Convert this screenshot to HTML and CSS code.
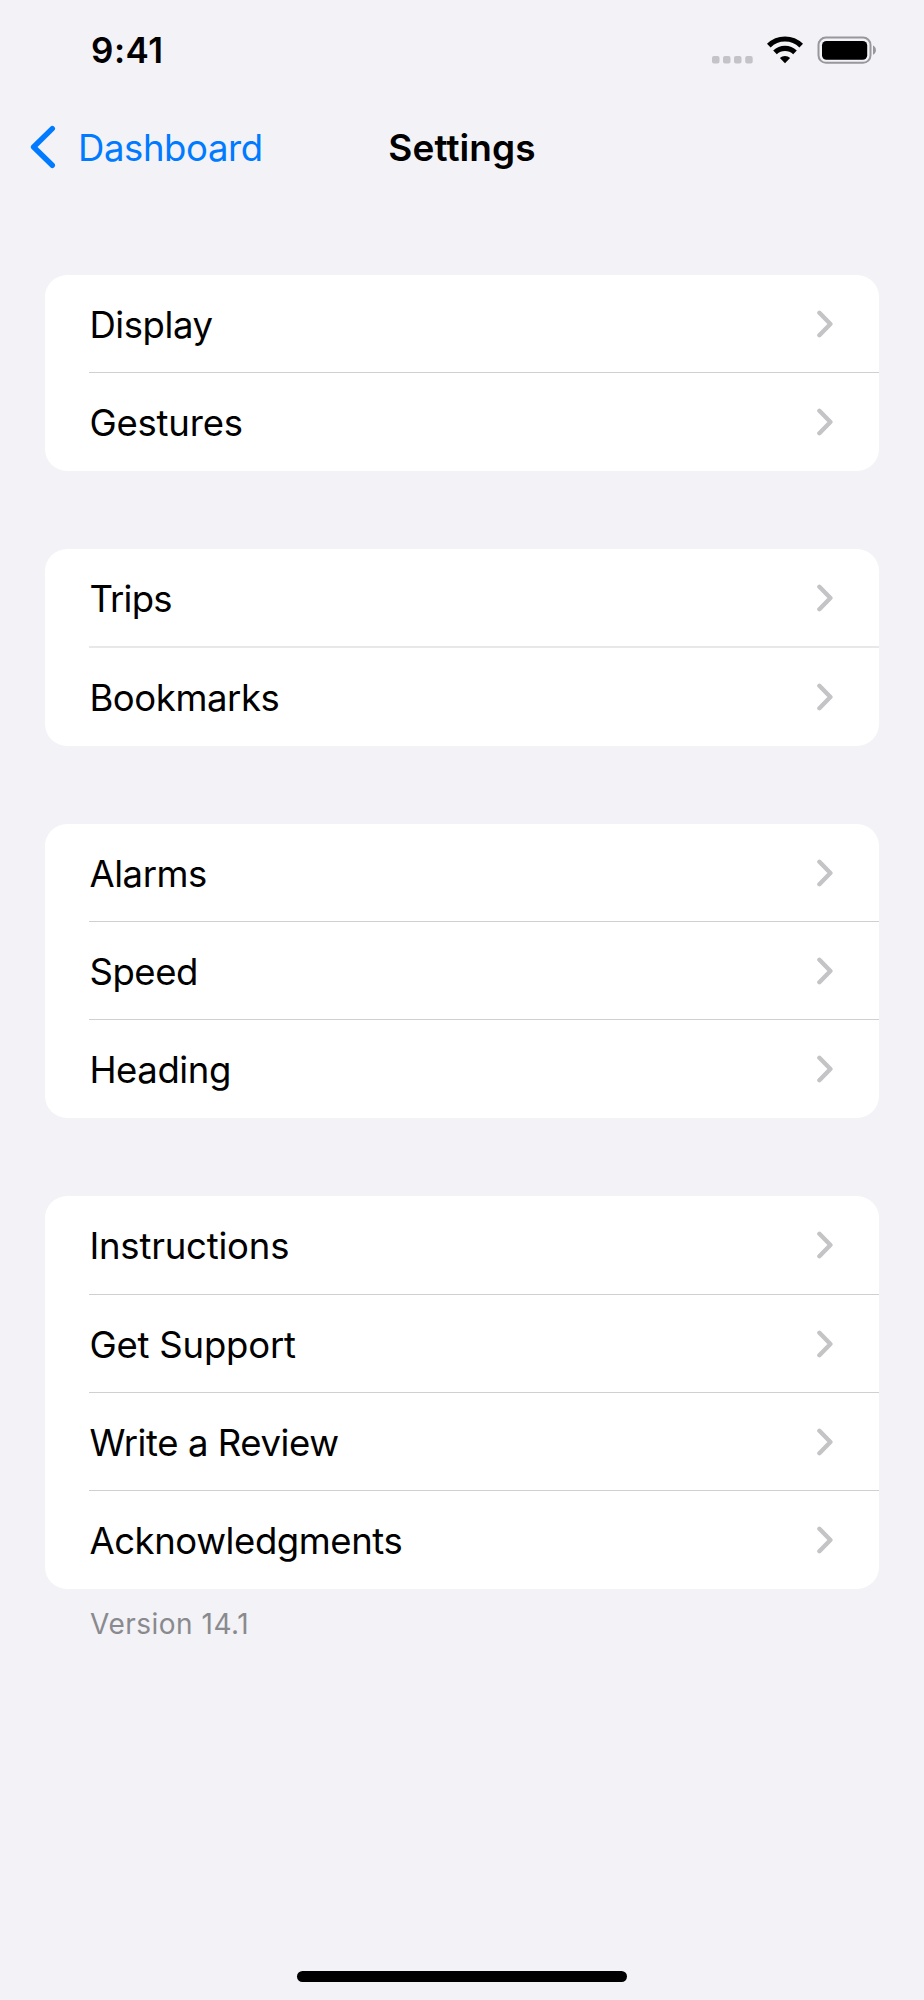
FILE: index.html
```html
<!DOCTYPE html>
<html lang="en">
<head>
    <meta charset="UTF-8">
    <meta name="viewport" content="width=device-width, initial-scale=1.0">
    <title>Settings</title>
    <link rel="stylesheet" href="styles.css">
</head>
<body>
    <svg class="sprite" width="0" height="0">
        <symbol id="chevron" viewBox="0 0 16 28">
            <path d="M2.4 2.8L13.4 14L2.4 25.2" fill="none" stroke="currentColor" stroke-width="4.4" stroke-linecap="round" stroke-linejoin="round"/>
        </symbol>
    </svg>
    <div class="screen">
        <header class="status-bar">
            <span class="time">9:41</span>
            <div class="status-icons">
                <svg class="signal" width="42" height="8" viewBox="0 0 42 8" fill="#c3c3c8">
                    <rect x="0" width="7.5" height="7.6" rx="2"/>
                    <rect x="11" width="7.5" height="7.6" rx="2"/>
                    <rect x="22" width="7.5" height="7.6" rx="2"/>
                    <rect x="33.2" width="7.5" height="7.6" rx="2"/>
                </svg>
                <svg class="wifi" width="36" height="28" viewBox="0 0 36 28" fill="none" stroke="#000">
                    <path d="M1.8 9.6A23.2 23.2 0 0 1 34.2 9.6" stroke-width="5.2"/>
                    <path d="M8 16.4A14.5 14.5 0 0 1 28 16.4" stroke-width="5.2"/>
                    <path d="M12.9 22A7.3 7.3 0 0 1 23.1 22L18 27.2Z" fill="#000" stroke="none"/>
                </svg>
                <svg class="battery" width="60" height="28" viewBox="0 0 60 28">
                    <rect x="1.5" y="1.6" width="52" height="25.2" rx="7.5" fill="none" stroke="#98989c" stroke-width="2"/>
                    <rect x="5" y="4.9" width="45.2" height="18.8" rx="4.5" fill="#000"/>
                    <path d="M56 9.6C59.9 11.2 59.9 17.2 56 18.8Z" fill="#98989c"/>
                </svg>
            </div>
        </header>

        <nav class="nav-bar">
            <a class="back">
                <svg width="26" height="44" viewBox="0 0 26 44">
                    <path d="M22.3 3.6L3.6 22L22.3 40.3" fill="none" stroke="currentColor" stroke-width="5.4" stroke-linecap="round" stroke-linejoin="round"/>
                </svg>
                <span>Dashboard</span>
            </a>
            <h1 class="title">Settings</h1>
        </nav>

        <main class="settings">
            <ul class="group">
                <li class="row"><span>Display</span><svg class="chevron"><use href="#chevron"/></svg></li>
                <li class="row loose"><span>Gestures</span><svg class="chevron"><use href="#chevron"/></svg></li>
            </ul>
            <ul class="group soft">
                <li class="row tight"><span>Trips</span><svg class="chevron"><use href="#chevron"/></svg></li>
                <li class="row"><span>Bookmarks</span><svg class="chevron"><use href="#chevron"/></svg></li>
            </ul>
            <ul class="group">
                <li class="row"><span>Alarms</span><svg class="chevron"><use href="#chevron"/></svg></li>
                <li class="row"><span>Speed</span><svg class="chevron"><use href="#chevron"/></svg></li>
                <li class="row"><span>Heading</span><svg class="chevron"><use href="#chevron"/></svg></li>
            </ul>
            <ul class="group">
                <li class="row loose"><span>Instructions</span><svg class="chevron"><use href="#chevron"/></svg></li>
                <li class="row loose"><span>Get Support</span><svg class="chevron"><use href="#chevron"/></svg></li>
                <li class="row"><span>Write a Review</span><svg class="chevron"><use href="#chevron"/></svg></li>
                <li class="row"><span>Acknowledgments</span><svg class="chevron"><use href="#chevron"/></svg></li>
            </ul>
            <p class="version">Version 14.1</p>
        </main>

        <div class="home-indicator"></div>
    </div>
</body>
</html>
```
FILE: styles.css
```css
* {
    box-sizing: border-box;
    margin: 0;
    padding: 0;
}

body {
    font-family: Inter, "Liberation Sans", sans-serif;
    background-color: #f2f2f7;
    color: #000;
}

.sprite {
    display: block;
}

.screen {
    display: flex;
    flex-direction: column;
    height: 2000px;
}

.status-bar {
    display: flex;
    justify-content: space-between;
    height: 98px;
    padding: 27px 47px 0 91px;
}

.time {
    font-size: 35px;
    font-weight: 600;
    line-height: 46px;
    letter-spacing: 0.5px;
}

.status-icons {
    display: flex;
    align-items: flex-start;
    padding-top: 9px;
}

.signal {
    margin-top: 20px;
}

.wifi {
    margin-left: 13px;
}

.battery {
    margin-left: 14px;
}

.nav-bar {
    display: grid;
    grid-template-columns: 1fr auto 1fr;
    align-items: center;
    height: 98px;
    padding: 0 30px;
}

.back {
    display: flex;
    align-items: center;
    gap: 22px;
    font-size: 36.5px;
    letter-spacing: -0.4px;
    color: #007aff;
}

.back span {
    padding-top: 1px;
}

.row span {
    padding-top: 2px;
}

.title {
    padding-top: 1px;
    font-size: 37px;
    font-weight: 600;
    letter-spacing: 0.1px;
}

.settings {
    flex: 1;
    padding: 78.8px 45px 0;
}

.group {
    list-style: none;
    margin-bottom: 78.1px;
    padding-left: 44.4px;
    border-radius: 22px;
    background-color: #fff;
}

.row {
    display: flex;
    justify-content: space-between;
    align-items: center;
    height: 98.2px;
    padding-right: 46px;
    font-size: 36.5px;
    letter-spacing: -0.42px;
    box-shadow: inset 0 -1px #d0d0d2;
}

.soft .row {
    box-shadow: inset 0 -1px #e8e8e9, 0 1px #e8e8e9;
}

.group .row:last-child {
    box-shadow: none;
}

.tight {
    letter-spacing: -0.8px;
}

.loose {
    letter-spacing: -0.2px;
}

.chevron {
    width: 16px;
    height: 28px;
    color: #c4c4c6;
}

.group:last-of-type {
    margin-bottom: 0;
}

.version {
    margin-top: 18px;
    padding-left: 45px;
    font-size: 28px;
    line-height: 34px;
    letter-spacing: 0.5px;
    color: #8a8a8e;
}

.home-indicator {
    width: 330px;
    height: 11px;
    margin: 0 auto 18px;
    border-radius: 6px;
    background-color: #000;
}
```
